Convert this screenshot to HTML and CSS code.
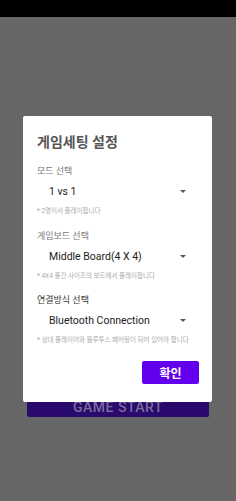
FILE: index.html
```html
<!DOCTYPE html>
<html>
<head>
    <meta charset="utf-8">
    <link rel="stylesheet" href="styles.css">
</head>
<body>
    <div class="statusbar"></div>
    <div class="main">
        <button class="start">GAME START</button>
    </div>

    <div class="dialog">
        <div class="titulo">게임세팅 설정</div>

        <div class="seccion">
            <div class="etiqueta">모드 선택</div>
            <div class="spinner"><span>1 vs 1</span><i class="flecha"></i></div>
            <div class="ayuda">* 2명이서 플레이합니다</div>
        </div>

        <div class="seccion s2">
            <div class="etiqueta">게임보드 선택</div>
            <div class="spinner"><span>Middle Board(4 X 4)</span><i class="flecha"></i></div>
            <div class="ayuda">* 4X4 중간 사이즈의 보드에서 플레이합니다</div>
        </div>

        <div class="seccion s3">
            <div class="etiqueta activa">연결방식 선택</div>
            <div class="spinner"><span>Bluetooth Connection</span><i class="flecha"></i></div>
            <div class="ayuda">* 상대 플레이어와 블루투스 페어링이 되어 있어야 합니다</div>
        </div>

        <div class="acciones">
            <button class="ok">확인</button>
        </div>
    </div>
</body>
</html>
```

FILE: styles.css
```css
body{
    margin: 0;
    background-color: #666666;
    font-family: Roboto, "Noto Sans CJK KR", sans-serif;
    height: 501px;
    overflow: hidden;
}
.statusbar{
    height: 17px;
    background-color: #000;
}
.main{
    display: flex;
    flex-direction: column;
    align-items: center;
    padding-top: 376px;
}
.start{
    width: 182px;
    height: 24px;
    border: none;
    border-radius: 2px;
    background-color: #2a0a6c;
    color: #7a6c9c;
    font-family: Roboto, sans-serif;
    font-weight: 500;
    font-size: 14px;
    letter-spacing: 0.5px;
    padding: 0;
    padding-top: 7px;
    display: flex;
    justify-content: center;
    align-items: flex-start;
    line-height: 14px;
}
.dialog{
    position: absolute;
    top: 116px;
    left: 23px;
    width: 189px;
    box-sizing: border-box;
    background-color: #fff;
    border-radius: 2px;
    padding: 16px 13px 18px 14px;
    display: flex;
    flex-direction: column;
}
.titulo{
    height: 20px;
    line-height: 20px;
    font-size: 14px;
    font-weight: 700;
    color: #555;
    margin-bottom: 13px;
}
.seccion{
    display: flex;
    flex-direction: column;
}
.s2{ margin-top: 15px; }
.s3{ margin-top: 14px; }
.etiqueta{
    height: 12px;
    line-height: 12px;
    font-size: 9px;
    color: #777;
}
.etiqueta.activa{
    color: #333;
}
.spinner{
    margin-top: 2px;
    height: 24px;
    display: flex;
    align-items: center;
    justify-content: space-between;
    padding: 0 13px 0 12px;
    font-size: 10.5px;
    color: #222;
}
.flecha{
    width: 0;
    height: 0;
    border-left: 3px solid transparent;
    border-right: 3px solid transparent;
    border-top: 3px solid #555;
}
.ayuda{
    margin-top: 4px;
    height: 8px;
    line-height: 8px;
    font-size: 6.5px;
    color: #aaa;
    white-space: nowrap;
}
.acciones{
    display: flex;
    justify-content: flex-end;
    margin-top: 17px;
}
.ok{
    width: 57px;
    height: 23px;
    border: none;
    border-radius: 2px;
    background-color: #6200ee;
    color: #fff;
    font-family: "Noto Sans CJK KR", sans-serif;
    font-weight: 700;
    font-size: 12px;
    padding: 0;
}
```
